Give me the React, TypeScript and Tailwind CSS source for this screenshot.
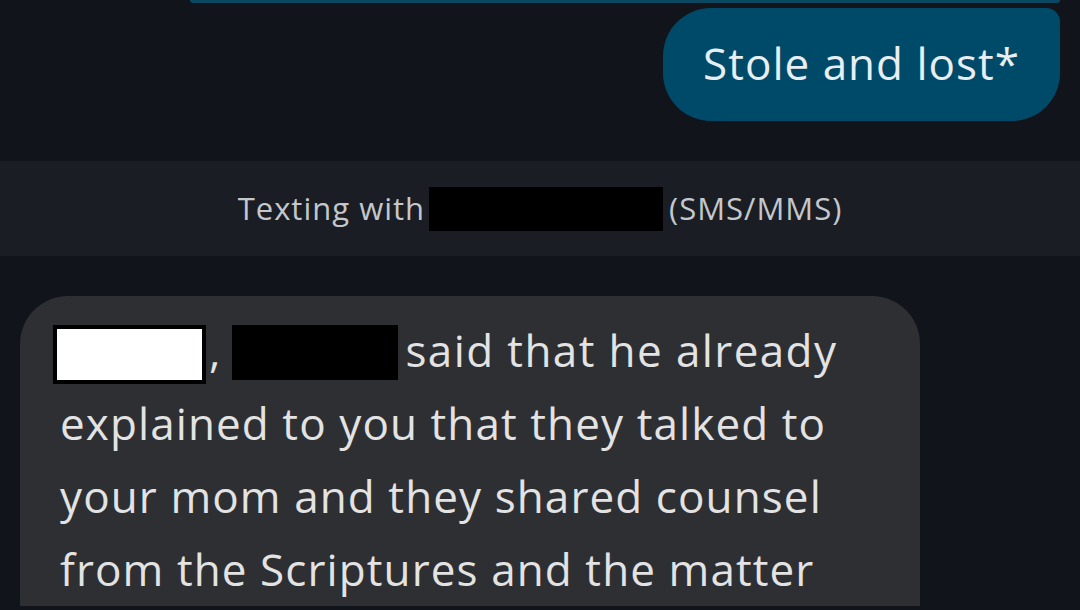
export default function App() {
  const font = { fontFamily: '"Open Sans", Roboto, sans-serif' };
  return (
    <div className="w-[1080px] h-[610px] overflow-hidden bg-[#11151b] flex flex-col" style={font}>
      <div className="flex justify-end pr-[20px]">
        <div className="w-[870px] h-[3px] bg-[#0a4862] rounded-b-[40px]" />
      </div>
      <div className="flex justify-end pr-[20px] pt-[5px]">
        <div className="h-[113px] w-[397px] rounded-[48px] rounded-tr-[14px] bg-[#004a69] flex items-center justify-center">
          <span className="text-[44px] text-[#e8eef2] leading-none pb-[4px] tracking-[1px]">Stole and lost*</span>
        </div>
      </div>
      <div className="mt-[40px] h-[95px] bg-[#1a1e24] flex items-center justify-center gap-[4px] text-[31px] text-[#c4c7cc] tracking-[1px]">
        <span>Texting with</span>
        <span className="inline-block w-[234px] h-[44px] bg-black" />
        <span className="ml-[2px]">(SMS/MMS)</span>
      </div>
      <div className="pl-[20px] pt-[40px]">
        <div className="w-[900px] rounded-t-[48px] bg-[#2d2f33] pl-[40px] pr-[40px] pt-[18px] text-[44px] leading-[73px] text-[#e3e3e3] tracking-[1.1px]">
          <div className="flex items-start h-[73px]">
            <span className="inline-block w-[153px] h-[59px] mt-[11px] bg-white border-[4px] border-black ml-[-7px]" />
            <span className="ml-[3px]">,</span>
            <span className="inline-block w-[166px] h-[55px] mt-[11px] bg-black ml-[10px]" />
            <span className="ml-[8px] tracking-[1.4px]">said that he already</span>
          </div>
          <div>explained to you that they talked to</div>
          <div>your mom and they shared counsel</div>
          <div>from the Scriptures and the matter</div>
        </div>
      </div>
    </div>
  );
}
